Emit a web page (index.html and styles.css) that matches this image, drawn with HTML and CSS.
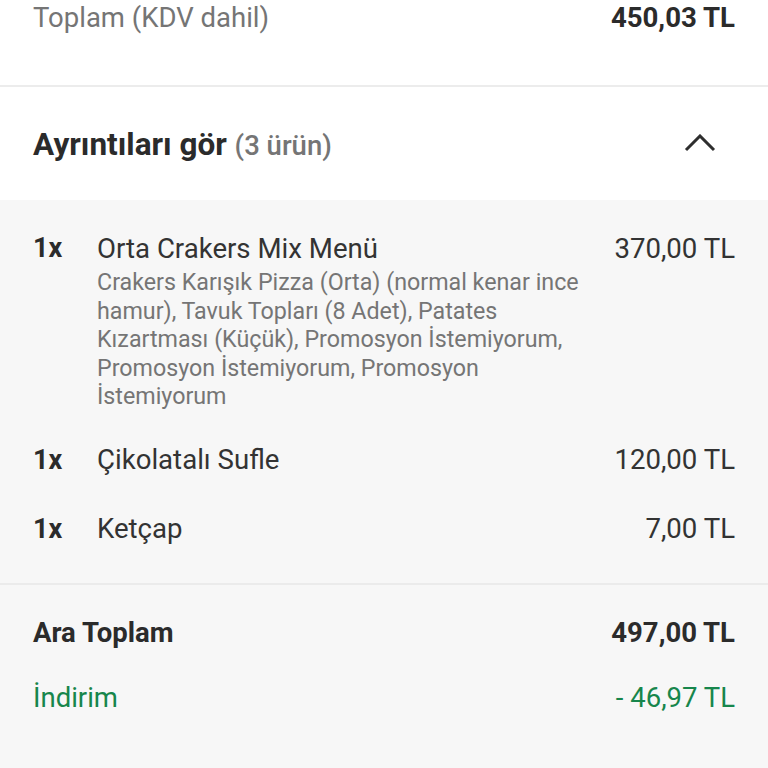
FILE: index.html
```html
<!DOCTYPE html>
<html lang="tr">
<head>
<meta charset="utf-8">
<link rel="stylesheet" href="styles.css">
</head>
<body>
<section class="total">
  <div class="row">
    <span class="total-label">Toplam (KDV dahil)</span>
    <span class="total-value">450,03 TL</span>
  </div>
</section>
<section class="header">
  <h2 class="title">Ayrıntıları gör <span class="count">(3 ürün)</span></h2>
  <svg class="chevron" width="32" height="18" viewBox="0 0 32 18"><polyline points="2,16 16,2 30,16" fill="none" stroke="#2e2e2e" stroke-width="3"/></svg>
</section>
<section class="details">
  <div class="items">
    <div class="item">
      <div class="item-row">
        <span class="qty">1x</span>
        <span class="name">Orta Crakers Mix Menü</span>
        <span class="price">370,00 TL</span>
      </div>
      <p class="desc">Crakers Karışık Pizza (Orta) (normal kenar ince hamur), Tavuk Topları (8 Adet), Patates Kızartması (Küçük), Promosyon İstemiyorum, Promosyon İstemiyorum, Promosyon İstemiyorum</p>
    </div>
    <div class="item">
      <div class="item-row">
        <span class="qty">1x</span>
        <span class="name">Çikolatalı Sufle</span>
        <span class="price">120,00 TL</span>
      </div>
    </div>
    <div class="item">
      <div class="item-row">
        <span class="qty">1x</span>
        <span class="name">Ketçap</span>
        <span class="price">7,00 TL</span>
      </div>
    </div>
  </div>
  <div class="sums">
    <div class="row sum-row bold">
      <span>Ara Toplam</span>
      <span>497,00 TL</span>
    </div>
    <div class="row sum-row discount">
      <span>İndirim</span>
      <span>- 46,97 TL</span>
    </div>
  </div>
</section>
</body>
</html>
```
FILE: styles.css
```css
html, body {
  margin: 0;
  padding: 0;
  background: #f7f7f7;
}
body {
  font-family: Roboto, "Noto Sans", sans-serif;
  color: #333333;
}
.row {
  display: flex;
  justify-content: space-between;
  align-items: center;
}
.total {
  background: #ffffff;
  padding: 0 33px 51px;
  border-bottom: 2px solid #ececec;
}
.total .row {
  height: 34px;
}
.total-label {
  font-size: 27.5px;
  color: #757575;
}
.total-value {
  font-size: 27.6px;
  font-weight: 700;
  color: #2b2b2b;
}
.header {
  background: #ffffff;
  height: 113px;
  padding: 2px 52px 0 33px;
  box-sizing: border-box;
  display: flex;
  justify-content: space-between;
  align-items: center;
}
.title {
  margin: 0;
  font-size: 31.5px;
  font-weight: 700;
  color: #2b2b2b;
}
.count {
  font-size: 27.5px;
  font-weight: 500;
  color: #757575;
}
.chevron {
  display: block;
  margin-bottom: 4px;
}
.details {
  background: #f7f7f7;
}
.items {
  padding: 32px 33px 38px;
  display: flex;
  flex-direction: column;
  gap: 37px;
  border-bottom: 2px solid #ebebeb;
}
.item-row {
  display: flex;
  align-items: center;
  height: 32px;
  font-size: 27.6px;
}
.qty {
  width: 64px;
  font-weight: 700;
  color: #2b2b2b;
  font-size: 27px;
}
.name {
  flex: 1;
  color: #333333;
}
.price {
  color: #333333;
}
.desc {
  margin: 4px 150px -4px 64px;
  font-size: 23.25px;
  line-height: 28.5px;
  color: #757575;
}
.sums {
  padding: 32px 33px 40px;
  display: flex;
  flex-direction: column;
  gap: 33px;
}
.sum-row {
  height: 32px;
  font-size: 27.5px;
}
.sum-row.bold {
  font-weight: 700;
  color: #2b2b2b;
}
.sum-row.discount {
  color: #17864c;
}
```
